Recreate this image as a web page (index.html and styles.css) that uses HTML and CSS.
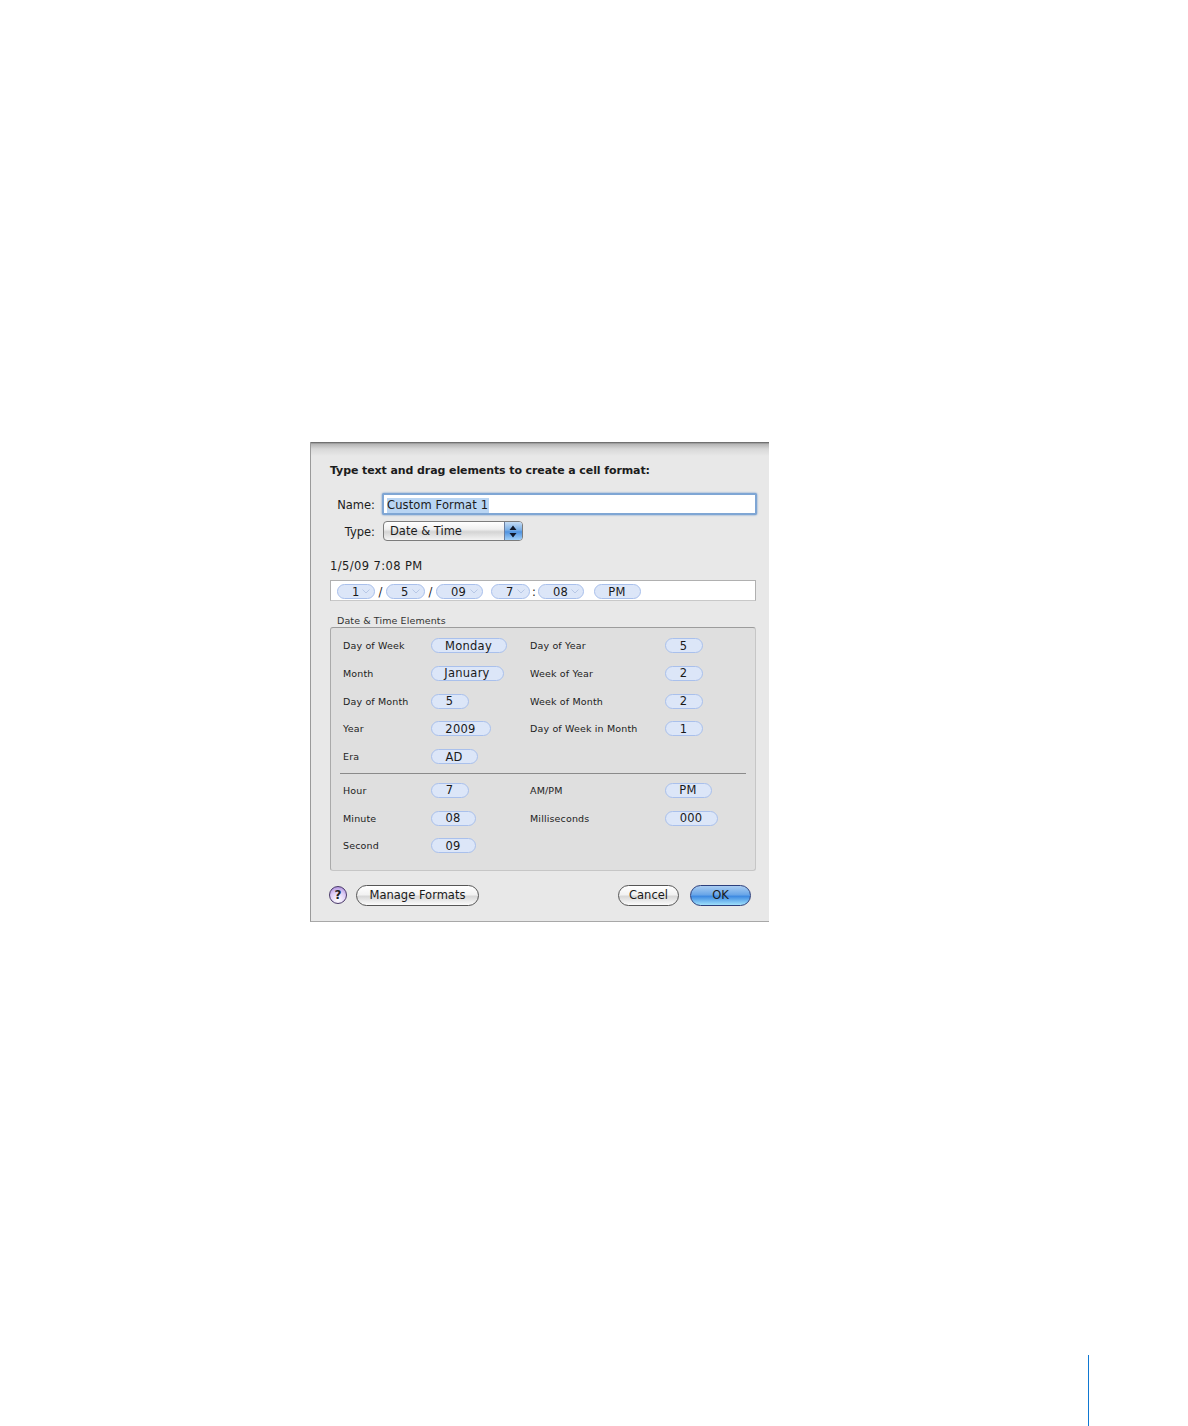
FILE: index.html
```html
<!DOCTYPE html>
<html lang="en">
<head>
<meta charset="utf-8">
<title>Custom Format</title>
<link rel="stylesheet" href="styles.css">
</head>
<body>
<main class="page">
  <section class="dialog">
    <h1 class="heading">Type text and drag elements to create a cell format:</h1>
    <div class="form-row name-row">
      <label class="form-label">Name:</label>
      <div class="name-input"><span class="selected">Custom Format 1</span></div>
    </div>
    <div class="form-row type-row">
      <label class="form-label">Type:</label>
      <div class="popup">
        <span class="popup-text">Date &amp; Time</span>
        <span class="stepper">
          <svg width="8" height="13" viewBox="0 0 8 13"><path d="M4 0.5 7.5 5H0.5Z M4 12.5 0.5 8H7.5Z" fill="#10182a"/></svg>
        </span>
      </div>
    </div>
    <p class="preview">1/5/09 7:08 PM</p>
    <div class="format-bar">
      <span class="pill chev w38">1<svg class="chevron" viewBox="0 0 8 5"><path d="M0.5 0.5 4 4 7.5 0.5" /></svg></span>
      <span class="sep w11">/</span>
      <span class="pill chev w39">5<svg class="chevron" viewBox="0 0 8 5"><path d="M0.5 0.5 4 4 7.5 0.5" /></svg></span>
      <span class="sep w11">/</span>
      <span class="pill chev w47">09<svg class="chevron" viewBox="0 0 8 5"><path d="M0.5 0.5 4 4 7.5 0.5" /></svg></span>
      <span class="sep w8"></span>
      <span class="pill chev w39">7<svg class="chevron" viewBox="0 0 8 5"><path d="M0.5 0.5 4 4 7.5 0.5" /></svg></span>
      <span class="sep w8">:</span>
      <span class="pill chev w46">08<svg class="chevron" viewBox="0 0 8 5"><path d="M0.5 0.5 4 4 7.5 0.5" /></svg></span>
      <span class="sep w10"></span>
      <span class="pill w47">PM</span>
    </div>
    <h2 class="group-title">Date &amp; Time Elements</h2>
    <div class="group">
      <div class="elements">
        <span class="el-label">Day of Week</span><div class="cell"><span class="pill w76">Monday</span></div>
        <span class="el-label">Day of Year</span><div class="cell"><span class="pill w38">5</span></div>
        <span class="el-label">Month</span><div class="cell"><span class="pill w73">January</span></div>
        <span class="el-label">Week of Year</span><div class="cell"><span class="pill w38">2</span></div>
        <span class="el-label">Day of Month</span><div class="cell"><span class="pill w38">5</span></div>
        <span class="el-label">Week of Month</span><div class="cell"><span class="pill w38">2</span></div>
        <span class="el-label">Year</span><div class="cell"><span class="pill w60">2009</span></div>
        <span class="el-label">Day of Week in Month</span><div class="cell"><span class="pill w38">1</span></div>
        <span class="el-label">Era</span><div class="cell"><span class="pill w47">AD</span></div>
      </div>
      <hr class="divider">
      <div class="elements">
        <span class="el-label">Hour</span><div class="cell"><span class="pill w38">7</span></div>
        <span class="el-label">AM/PM</span><div class="cell"><span class="pill w47">PM</span></div>
        <span class="el-label">Minute</span><div class="cell"><span class="pill w45">08</span></div>
        <span class="el-label">Milliseconds</span><div class="cell"><span class="pill w53">000</span></div>
        <span class="el-label">Second</span><div class="cell"><span class="pill w45">09</span></div>
      </div>
    </div>
    <div class="actions">
      <span class="help">?</span>
      <button class="btn manage">Manage Formats</button>
      <span class="spacer"></span>
      <button class="btn cancel">Cancel</button>
      <button class="btn ok">OK</button>
    </div>
  </section>
  <div class="page-rule"></div>
</main>
</body>
</html>
```
FILE: styles.css
```css
* { box-sizing: border-box; }
html, body { margin: 0; padding: 0; background: #fff; }
body { font-family: "DejaVu Sans", "Liberation Sans", sans-serif; color: #1c1c1c; }
.page { position: relative; width: 1188px; height: 1426px; padding: 442px 0 0 310px; overflow: hidden; }
.dialog {
  width: 459px; height: 480px; padding: 21px 13px 0 20px;
  background: linear-gradient(#5a5a5a 0, #b5b5b5 2px, #d8d8d8 7px, #e8e8e8 14px);
  border-left: 1px solid #9a9a9a; border-bottom: 1px solid #a8a8a8;
}
.heading { margin: 0 0 0 -1px; height: 15px; font-size: 11px; line-height: 16px; font-weight: 700; letter-spacing: -0.095px; white-space: nowrap; }
.form-row { display: flex; align-items: center; }
.form-label { flex: none; width: 45px; text-align: right; font-size: 11.5px; line-height: 16px; padding-top: 1px; white-space: nowrap; }
.name-row { margin-top: 15px; height: 22px; margin-left: -1px; }
.name-input {
  flex: none; margin-left: 7px; width: 375px; height: 22px; padding: 3px 0 0 3px;
  background: #fff; border: 2px solid #7fa6d4; border-radius: 2px;
  box-shadow: 0 0 2px #5a88c4; font-size: 11.5px; line-height: 14px; letter-spacing: 0.13px;
}
.selected { display: inline-block; height: 15px; background: #b9d5f3; padding-right: 1px; white-space: nowrap; }
.type-row { margin-top: 6px; height: 20px; margin-left: -1px; }
.popup {
  flex: none; margin-left: 8px; width: 140px; height: 20px; display: flex; align-items: center;
  border: 1px solid #7c7c7c; border-radius: 4px; overflow: hidden;
  background: linear-gradient(#fff, #f0f0f0 40%, #d4d4d4 55%, #f4f4f4);
  font-size: 11.5px;
}
.popup-text { flex: 1; padding-left: 6px; }
.stepper {
  width: 18px; height: 100%; padding-right: 2px; display: flex; align-items: center; justify-content: center;
  background: linear-gradient(#c5dcf4, #79aee6 45%, #4f92df 55%, #a2d0f8);
  border-left: 1px solid #6a7ea0;
}
.preview { margin: 17px 0 0 -1px; height: 15px; font-size: 11.5px; line-height: 17px; letter-spacing: 0.4px; }
.format-bar {
  flex: none; margin: 7px 0 0 -1px; width: 426px; height: 21px; padding: 3px 0 0 6px;
  display: flex; align-items: flex-start; background: #fff;
  border: 1px solid #b0b0b0; border-bottom-color: #c8c8c8;
}
.pill {
  display: flex; align-items: center; justify-content: center; position: relative;
  height: 15px; border: 1px solid #a9c0ec; border-radius: 8px;
  background: #dce6f8; font-size: 11.5px; line-height: 13px; color: #1a1a1a;
  padding-top: 1px; padding-right: 1px; white-space: nowrap; letter-spacing: 0.25px;
}
.chev { padding-right: 2px; justify-content: flex-start; padding-left: 14px; }
.chevron { position: absolute; right: 4px; top: 4px; width: 8px; height: 5px; fill: none; stroke: #b8c8e6; stroke-width: 1; }
.w38 { width: 38px; } .w39 { width: 39px; } .w45 { width: 45px; } .w46 { width: 46px; } .w47 { width: 47px; }
.w53 { width: 53px; } .w60 { width: 60px; } .w73 { width: 73px; } .w76 { width: 76px; }
.sep { font-size: 11.5px; line-height: 17px; text-align: center; flex: none; }
.sep.w11 { width: 11px; } .sep.w8 { width: 8px; } .sep.w10 { width: 10px; }
.group-title { margin: 13px 0 0 6px; height: 13px; font-size: 9.5px; line-height: 13px; font-weight: 400; letter-spacing: 0.1px; color: #333; }
.group {
  margin: 0 0 0 -1px; width: 426px; height: 244px; padding: 10px 0 0 12px;
  background: #dfdfdf; border: 1px solid #c6c6c6; border-top-color: #9c9c9c; border-radius: 3px;
  border-left-color: #aaa;
}
.elements { display: grid; grid-template-columns: 88px 99px 135px 1fr; grid-auto-rows: 27.75px; }
.cell { display: flex; align-items: flex-start; }
.el-label { font-size: 9.5px; line-height: 15px; white-space: nowrap; color: #222; letter-spacing: 0.15px; }
.divider { margin: -4px 0 9px -3px; width: 406px; height: 1px; border: 0; background: #8a8a8a; }
.actions { display: flex; align-items: center; margin: 13px 0 0 -2px; height: 22px; width: 422px; }
.help {
  width: 18px; height: 18px; border-radius: 50%; margin-right: 9px; flex: none;
  display: flex; align-items: center; justify-content: center;
  border: 1px solid #4a3a6a; background: radial-gradient(circle at 50% 80%, #fff, #dccbf4 55%, #9b7ad4);
  font-size: 12px; font-weight: 700; color: #222;
}
.btn {
  height: 21px; padding: 0; border: 1px solid #555; border-radius: 11px;
  background: linear-gradient(#fff, #f2f2f2 45%, #d8d8d8 55%, #fbfbfb);
  font-family: inherit; font-size: 11.5px; line-height: 17px; color: #1a1a1a;
}
.manage { width: 123px; }
.spacer { flex: 1; }
.cancel { width: 61px; margin-right: 11px; }
.ok {
  width: 61px; border-color: #2c3f7c;
  background: linear-gradient(#a9cdf2, #6aa6e8 45%, #3f8be2 55%, #9fe0fb);
}
.page-rule { position: absolute; left: 1088px; top: 1355px; width: 1px; height: 71px; background: #0f78d2; }
```
